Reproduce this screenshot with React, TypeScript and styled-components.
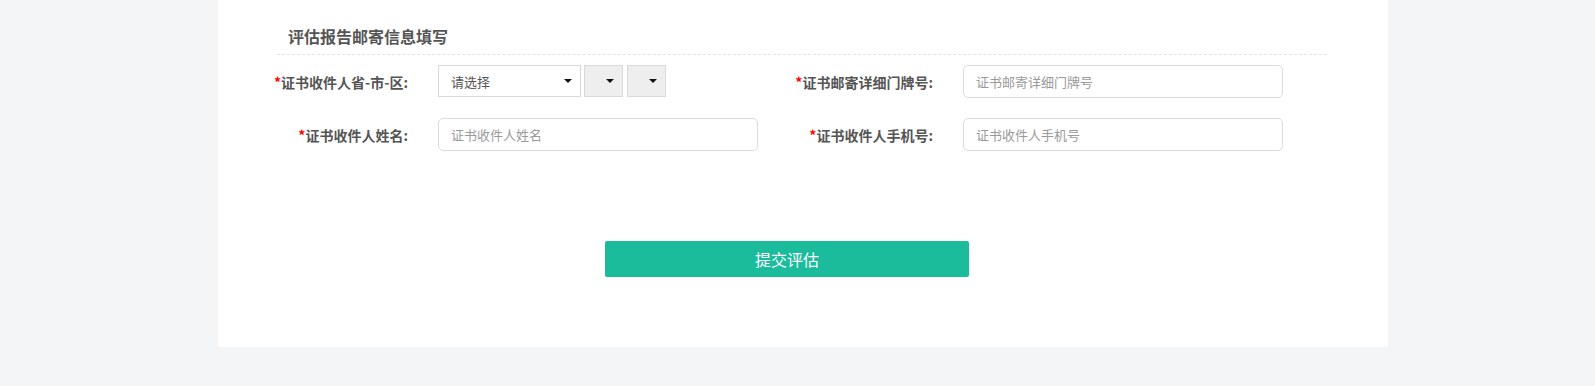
import React from "react";
import styled, { createGlobalStyle } from "styled-components";

const GlobalStyle = createGlobalStyle`
  html, body {
    margin: 0;
    padding: 0;
    background: #f4f5f7;
    font-family: "Noto Sans CJK SC", "Microsoft YaHei", sans-serif;
  }
`;

const Page = styled.div`
  width: 1595px;
  height: 386px;
  padding-left: 218px;
  box-sizing: border-box;
  background: #f4f5f7;
`;

const Panel = styled.div`
  width: 1170px;
  height: 347px;
  background: #fff;
  border-radius: 0 0 3px 3px;
  box-sizing: border-box;
  padding-top: 26px;
`;

const SectionTitle = styled.div`
  margin: 0 61px 0 59px;
  padding: 0 0 8px 11px;
  height: 20px;
  line-height: 20px;
  font-size: 16px;
  font-weight: bold;
  color: #555;
  border-bottom: 1px dashed #e2e2e2;
`;

const Form = styled.div`
  margin: 10px 0 0 15px;
  width: 1050px;
  display: grid;
  grid-template-columns: 525px 525px;
  row-gap: 20px;
`;

const Field = styled.div`
  display: flex;
  align-items: center;
  height: 33px;
`;

const Label = styled.label`
  width: 175px;
  margin-right: 30px;
  flex-shrink: 0;
  text-align: right;
  font-size: 14px;
  font-weight: bold;
  color: #555;
  white-space: nowrap;
`;

const Star = styled.span`
  color: #f00;
`;

const TextInput = styled.input`
  width: 320px;
  height: 33px;
  box-sizing: border-box;
  border: 1px solid #dcdcdc;
  border-radius: 5px;
  padding: 0 12px;
  font-family: inherit;
  font-size: 13px;
  color: #555;
  outline: none;
  &::placeholder {
    color: #9a9a9a;
  }
`;

const Selects = styled.div`
  display: flex;
  align-items: flex-start;
  height: 33px;
`;

const SelectBox = styled.div<{ $w: number; $gray?: boolean; $ml?: number }>`
  width: ${(p) => p.$w}px;
  height: 32px;
  margin-left: ${(p) => p.$ml ?? 0}px;
  box-sizing: border-box;
  border: 1px solid #d9d9d9;
  background: ${(p) => (p.$gray ? "#eeeeee" : "#fff")};
  display: flex;
  align-items: center;
  justify-content: space-between;
  padding: 0 8px 0 12px;
  font-size: 13px;
  color: #555;
`;

const Caret = styled.span`
  width: 0;
  height: 0;
  border-left: 4px solid transparent;
  border-right: 4px solid transparent;
  border-top: 4px solid #111;
  margin-left: auto;
`;

const ButtonRow = styled.div`
  margin-top: 90px;
  padding-left: 387px;
`;

const SubmitButton = styled.button`
  width: 364px;
  height: 36px;
  border: none;
  border-radius: 2px;
  background: #1abc9c;
  color: #fff;
  font-family: inherit;
  font-size: 16px;
  cursor: pointer;
`;

export default function App() {
  return (
    <>
      <GlobalStyle />
      <Page>
        <Panel>
          <SectionTitle>评估报告邮寄信息填写</SectionTitle>
          <Form>
            <Field>
              <Label>
                <Star>*</Star>证书收件人省-市-区:
              </Label>
              <Selects>
                <SelectBox $w={143}>
                  请选择
                  <Caret />
                </SelectBox>
                <SelectBox $w={39} $gray $ml={3}>
                  <Caret />
                </SelectBox>
                <SelectBox $w={39} $gray $ml={4}>
                  <Caret />
                </SelectBox>
              </Selects>
            </Field>
            <Field>
              <Label>
                <Star>*</Star>证书邮寄详细门牌号:
              </Label>
              <TextInput placeholder="证书邮寄详细门牌号" />
            </Field>
            <Field>
              <Label>
                <Star>*</Star>证书收件人姓名:
              </Label>
              <TextInput placeholder="证书收件人姓名" />
            </Field>
            <Field>
              <Label>
                <Star>*</Star>证书收件人手机号:
              </Label>
              <TextInput placeholder="证书收件人手机号" />
            </Field>
          </Form>
          <ButtonRow>
            <SubmitButton>提交评估</SubmitButton>
          </ButtonRow>
        </Panel>
      </Page>
    </>
  );
}
